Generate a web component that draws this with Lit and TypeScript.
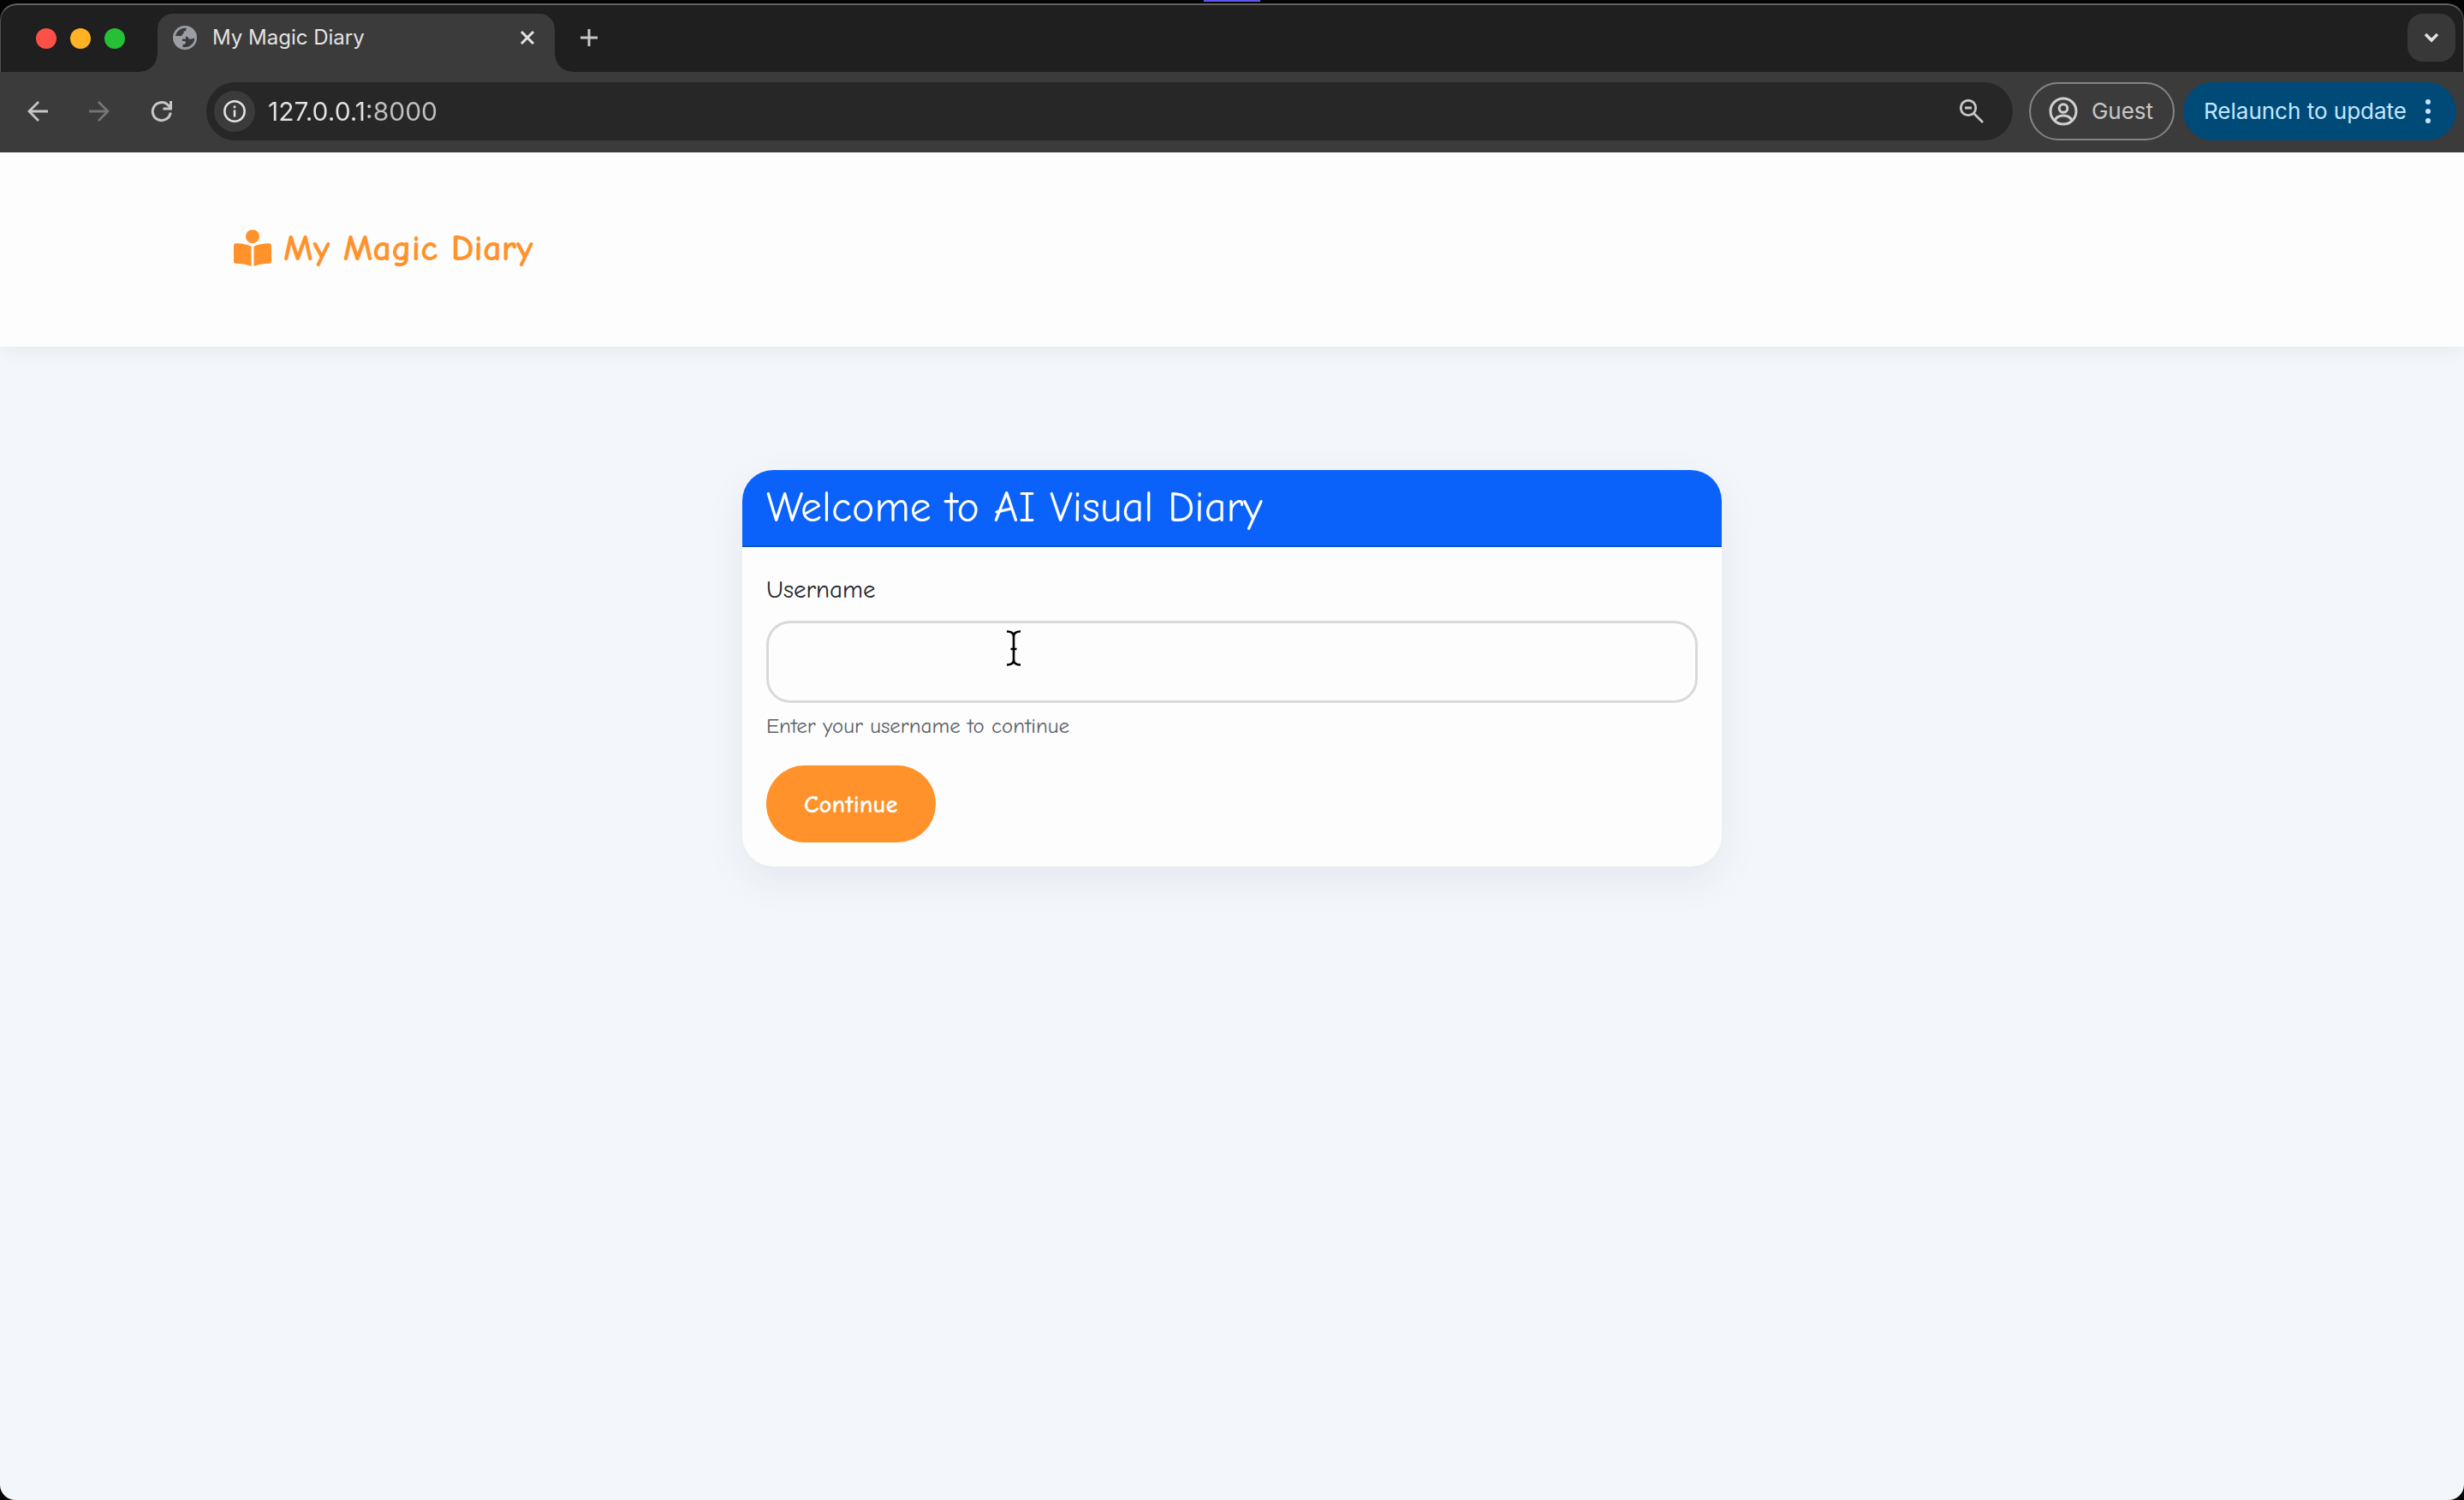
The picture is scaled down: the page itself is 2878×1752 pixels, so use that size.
import { LitElement, html, css, svg } from "lit";
import { customElement } from "lit/decorators.js";

const icons = {
  globe: svg`<svg viewBox="0 0 28 28" width="28" height="28"><circle cx="14" cy="14" r="14" fill="#9a9da1"/><path d="M3 12C4 7 8 3.200 13.500 2.700H15.500V4.500C15.500 6 14.500 6.500 12.500 6.500V8.500C12.500 9.500 11.500 10 10.500 10V12H3ZM15 12.500C17 12.500 18 13.500 18.500 15.500H22C23 15.500 23.500 14.500 25.300 14.500C25 20.500 20 25.500 13 25.300L11.500 25V22C14 22 15 21 15 19.500 15 18.500 14.500 18 13 18H11V15.500H15Z" fill="#3b3b3b"/></svg>`,
  close: svg`<svg viewBox="0 0 20 20" width="20" height="20" fill="none" stroke="#e3e3e3" stroke-width="3"><path d="M3 3l14 14M17 3L3 17"/></svg>`,
  plus: svg`<svg viewBox="0 0 20 20" width="20" height="20" fill="none" stroke="#c7c7c7" stroke-width="3"><path d="M10 0v20M0 10h20"/></svg>`,
  chevron: svg`<svg viewBox="0 0 20 20" width="20" height="20" fill="none" stroke="#e3e3e3" stroke-width="3.500"><path d="M3 6l7 7 7-7"/></svg>`,
  back: svg`<svg viewBox="0 0 24 24" width="24" height="24" fill="none" stroke="#c7c7c7" stroke-width="2.800"><path d="M13 1 2 12l11 11M2 12h22"/></svg>`,
  forward: svg`<svg viewBox="0 0 24 24" width="24" height="24" fill="none" stroke="#757575" stroke-width="2.800"><path d="M11 1l11 11-11 11M22 12H0"/></svg>`,
  reload: svg`<svg viewBox="0 0 26 26" width="26" height="26" fill="none" stroke="#c7c7c7" stroke-width="3"><path d="M23.200 14.500A10.500 10.500 0 1 1 20 5.500L23 8.500"/><path d="M23.500 1v9h-9"/></svg>`,
  info: svg`<svg viewBox="0 0 26 26" width="26" height="26" fill="none" stroke="#e3e3e3" stroke-width="2.500"><circle cx="13" cy="13" r="11.700"/><path d="M13 11.500v8M13 6.500v2.800"/></svg>`,
  zoomOut: svg`<svg viewBox="0 0 28 28" width="28" height="28" fill="none" stroke="#c7c7c7" stroke-width="2.800"><circle cx="10" cy="10" r="8.700"/><path d="M6 10h8M16 16l11 11"/></svg>`,
  person: svg`<svg viewBox="0 0 34 34" width="34" height="34" fill="none" stroke="#d0d0d0" stroke-width="3"><circle cx="17" cy="17" r="15"/><circle cx="17" cy="13.500" r="4.800"/><path d="M7 27.500c2-4 5.500-5.500 10-5.500s8 1.500 10 5.500"/></svg>`,
  dots: svg`<svg viewBox="0 0 6 30" width="6" height="30" fill="#c2e7ff"><circle cx="3" cy="4" r="3"/><circle cx="3" cy="15" r="3"/><circle cx="3" cy="26" r="3"/></svg>`,
  reader: svg`<svg viewBox="0 0 44 44" width="44" height="44" fill="#ff922b"><circle cx="22" cy="8.200" r="8"/><path d="M2.500 16.300C9 16 15 17.200 20.500 19.800V43C14.500 40.800 8 40 2.500 39.800 1 39.700 0 38.800 0 37.500V18.700C0 17.300 1 16.300 2.500 16.300ZM41.500 16.300C35 16 29 17.200 23.500 19.800V43C29.500 40.800 36 40 41.500 39.800 43 39.700 44 38.800 44 37.500V18.700C44 17.300 43 16.300 41.500 16.300Z"/></svg>`,
  caret: svg`<svg viewBox="0 0 18 42" width="18" height="42" fill="none" stroke="#000" stroke-width="2.600"><path d="M1 1.500c4.500 0 8 1.500 8 6v27c0 4.500-3.500 6-8 6M17 1.500c-4.500 0-8 1.500-8 6M17 40.500c-4.500 0-8-1.500-8-6M5.500 22h7"/></svg>`,
};

@customElement("browser-chrome")
class BrowserChrome extends LitElement {
  static styles = css`
    :host { display: block; font-family: Inter, "Liberation Sans", sans-serif; }
    button { font: inherit; color: inherit; border: 0; margin: 0; padding: 0; background: none; display: flex; align-items: center; justify-content: center; }
    svg { display: block; flex: none; }
    .strip { display: flex; align-items: flex-end; height: 80px; box-sizing: border-box; border-top: 2px solid #62625f; border-left: 1px solid #50504d; border-right: 1px solid #50504d; border-radius: 20px 20px 0 0; background: #1f1f1f; padding: 0 9px 0 41px; }
    .lights { display: flex; gap: 16px; padding-bottom: 27px; }
    .light { width: 24px; height: 24px; border-radius: 50%; }
    .red { background: #ff5047; }
    .amber { background: #ffb224; }
    .green { background: #25c035; }
    .tab { position: relative; display: flex; align-items: center; box-sizing: border-box; width: 464px; height: 68px; margin-left: 38px; padding: 0 22px 12px 18px; border-radius: 18px 18px 0 0; background: #3b3b3b; color: #e3e3e3; font-size: 24px; line-height: 32px; }
    .tab::before, .tab::after { content: ""; position: absolute; bottom: 0; width: 20px; height: 20px; }
    .tab::before { right: 100%; background: radial-gradient(circle at 0 0, transparent 19px, #3b3b3b 20px); }
    .tab::after { left: 100%; background: radial-gradient(circle at 100% 0, transparent 19px, #3b3b3b 20px); }
    .title { flex: 1; padding-left: 18px; }
    .new { padding: 0 30px 30px; }
    .list { width: 56px; height: 56px; margin: 0 0 12px auto; border-radius: 18px; background: #383838; }
    .bar { display: flex; align-items: center; height: 94px; box-sizing: border-box; padding: 0 9px 2px 32px; background: #3b3b3b; color: #e3e3e3; font-size: 26px; line-height: 36px; }
    .nav { display: flex; align-items: center; gap: 48px; margin-right: 39px; }
    .address { flex: 1; display: flex; align-items: center; height: 68px; border-radius: 34px; background: #272727; padding: 0 34px 0 9px; }
    .site { width: 48px; height: 48px; border-radius: 50%; background: #3b3b3b; }
    .url { flex: 1; min-width: 0; margin: 0 0 0 15px; padding: 0; border: 0; outline: 0; font: inherit; font-size: 30px; color: transparent; background: linear-gradient(90deg, #e3e3e3 118px, #c0c0c5 118px); background-clip: text; -webkit-background-clip: text; }
    .guest { box-sizing: border-box; width: 170px; height: 68px; gap: 16px; padding-right: 2px; margin: 0 10px 0 19px; border: 2px solid #858585; border-radius: 34px; color: #c7c7c7; }
    .update { width: 319px; height: 68px; gap: 22px; padding-right: 6px; border-radius: 34px; background: #004a77; color: #c2e7ff; white-space: nowrap; }
  `;

  render() {
    return html`
      <div class="strip">
        <div class="lights"><i class="light red"></i><i class="light amber"></i><i class="light green"></i></div>
        <div class="tab">${icons.globe}<span class="title">My Magic Diary</span><button aria-label="Close tab">${icons.close}</button></div>
        <button class="new" aria-label="New tab">${icons.plus}</button>
        <button class="list" aria-label="Search tabs">${icons.chevron}</button>
      </div>
      <div class="bar">
        <div class="nav">
          <button aria-label="Back">${icons.back}</button>
          <button aria-label="Forward">${icons.forward}</button>
          <button aria-label="Reload">${icons.reload}</button>
        </div>
        <div class="address">
          <button class="site" aria-label="Site information">${icons.info}</button>
          <input class="url" aria-label="Address" value="127.0.0.1:8000" />
          <button aria-label="Zoom">${icons.zoomOut}</button>
        </div>
        <button class="guest">${icons.person}<span>Guest</span></button>
        <button class="update"><span>Relaunch to update</span>${icons.dots}</button>
      </div>
    `;
  }
}

@customElement("login-card")
class LoginCard extends LitElement {
  static styles = css`
    :host { display: block; }
    .card { border-radius: 36px; overflow: hidden; background: #fdfdfd; box-shadow: 0 16px 48px rgba(40, 40, 90, 0.07); }
    .head { margin: 0; padding: 15px 28px; border-bottom: 2px solid #0a55c8; background: #0a62fb; color: #fff; font-size: 50px; line-height: 58px; font-weight: 400; }
    .body { display: flex; flex-direction: column; align-items: flex-start; padding: 30px 28px 28px; }
    .label { color: #212529; font-size: 29px; line-height: 40px; margin-bottom: 16px; }
    .field { position: relative; width: 100%; }
    .input { display: block; box-sizing: border-box; width: 100%; height: 96px; padding: 0 32px; border: 3px solid #d9d9d9; border-radius: 28px; background: #fdfdfd; font: inherit; font-size: 29px; outline: 0; }
    .pointer { position: absolute; left: 280px; top: 11px; pointer-events: none; }
    .help { margin: 8px 0 28px; color: #5c6167; font-size: 25px; line-height: 37px; }
    .submit { height: 90px; padding: 0 44px; border: 0; border-radius: 45px; background: #ff922b; color: #fff; font: inherit; font-size: 29px; font-weight: 700; }
    svg { display: block; }
  `;

  render() {
    return html`
      <form class="card" @submit=${(e: Event) => e.preventDefault()}>
        <h1 class="head">Welcome to AI Visual Diary</h1>
        <div class="body">
          <label class="label" for="username">Username</label>
          <div class="field">
            <input class="input" id="username" type="text" aria-describedby="help" />
            <span class="pointer">${icons.caret}</span>
          </div>
          <div class="help" id="help">Enter your username to continue</div>
          <button class="submit" type="submit">Continue</button>
        </div>
      </form>
    `;
  }
}

@customElement("app-root")
class AppRoot extends LitElement {
  static styles = css`
    :host { display: flex; flex-direction: column; min-height: 100vh; background: #050508; }
    .desktop { display: flex; justify-content: center; height: 4px; }
    .notch { width: 66px; height: 2px; background: #5a58f0; }
    .page { flex: 1; display: flex; flex-direction: column; border-radius: 0 0 18px 18px; overflow: hidden; background: #f3f6fa; font-family: "Comic Neue", "Chalkboard SE", "Comic Sans MS", Lato, sans-serif; }
    .header { background: #fdfdfd; box-shadow: 0 4px 20px rgba(40, 40, 70, 0.07); padding: 82px 32px 85px; }
    .inner { max-width: 2332px; margin: 0 auto; }
    .brand { display: inline-flex; align-items: center; gap: 14px; color: #ff922b; font-size: 43px; line-height: 60px; font-weight: 700; text-decoration: none; }
    .main { width: 100%; max-width: 1144px; margin: 144px auto 0; }
    svg { display: block; }
  `;

  render() {
    return html`
      <div class="desktop"><div class="notch"></div></div>
      <browser-chrome></browser-chrome>
      <div class="page">
        <header class="header"><div class="inner"><a class="brand" href="#">${icons.reader}<span>My Magic Diary</span></a></div></header>
        <main class="main"><login-card></login-card></main>
      </div>
    `;
  }
}
